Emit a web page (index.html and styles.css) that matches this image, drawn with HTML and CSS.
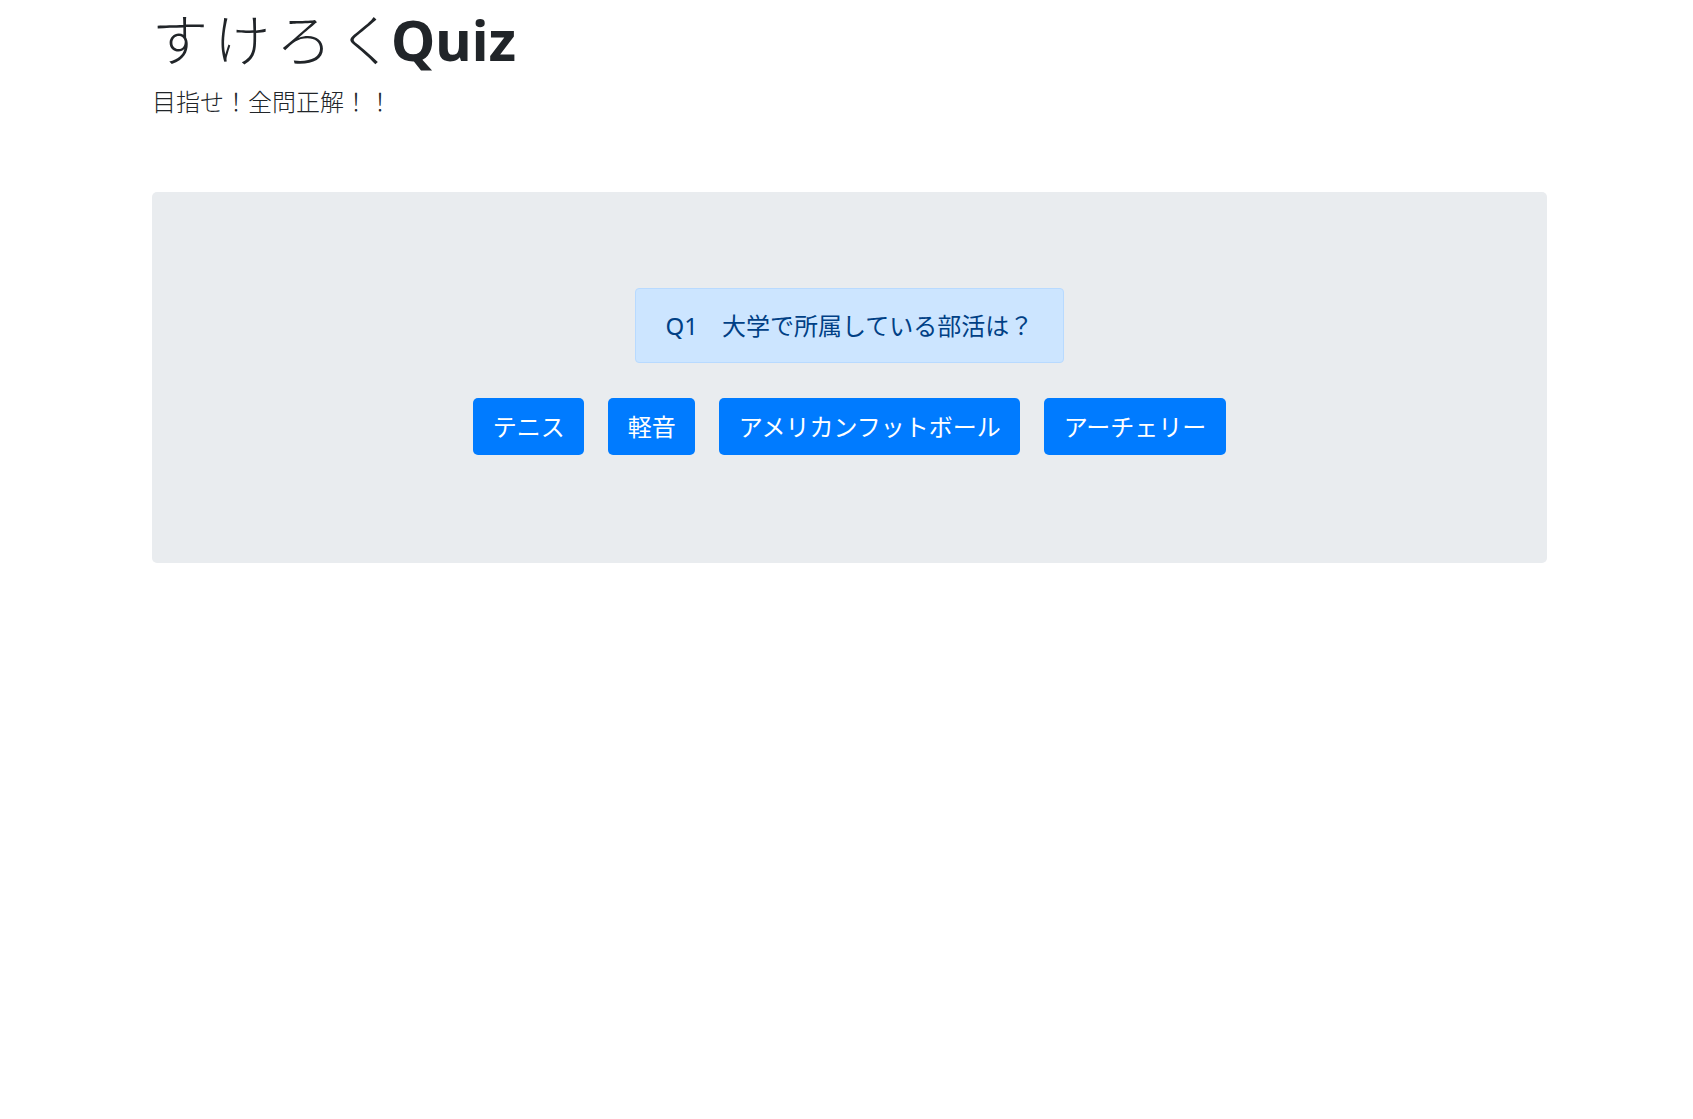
FILE: index.html
```html
<!DOCTYPE html>
<html lang="ja">
<head>
<meta charset="utf-8">
<title>すけろくQuiz</title>
<link rel="stylesheet" href="styles.css">
</head>
<body>
<div class="container">
  <header class="header">
    <h1 class="title"><span class="title-kana">すけろく</span><b class="title-strong">Quiz</b></h1>
    <p class="lead">目指せ！全問正解！！</p>
  </header>
  <main class="jumbotron">
    <div class="question">Q1　大学で所属している部活は？</div>
    <div class="choices">
      <button class="btn" type="button">テニス</button>
      <button class="btn" type="button">軽音</button>
      <button class="btn" type="button">アメリカンフットボール</button>
      <button class="btn" type="button">アーチェリー</button>
    </div>
  </main>
</div>
</body>
</html>
```
FILE: styles.css
```css
html, body {
  margin: 0;
  padding: 0;
  background: #fff;
}
body {
  font-family: "Noto Sans", "Noto Sans CJK JP", sans-serif;
  color: #212529;
}
.container {
  margin: 0 146px 0 152px;
}
.header {
  display: flex;
  flex-direction: column;
}
.title {
  margin: 0;
  font-size: 56px;
  line-height: 1.2;
  font-weight: 300;
  padding-top: 6px;
}
.title-kana {
  letter-spacing: 6px;
  margin-right: -9px;
}
.title-strong {
  font-weight: 700;
}
.lead {
  margin: 11px 0 0;
  font-size: 24px;
  line-height: 36px;
  font-weight: 300;
}
.jumbotron {
  margin-top: 72px;
  background: #e9ecef;
  border-radius: 5px;
  padding: 96px 0 108px;
  display: flex;
  flex-direction: column;
  align-items: center;
  gap: 35px;
}
.question {
  background: #cce5ff;
  border: 1px solid #b8daff;
  color: #004085;
  border-radius: 4px;
  font-size: 24px;
  line-height: 36px;
  padding: 18.5px 30px;
}
.choices {
  display: flex;
  gap: 24px;
}
.btn {
  font-family: "Noto Sans", "Noto Sans CJK JP", sans-serif;
  background: #007bff;
  color: #fff;
  border: 0;
  border-radius: 5px;
  font-size: 24px;
  line-height: 36px;
  padding: 10.5px 19.5px;
  cursor: pointer;
}
```
